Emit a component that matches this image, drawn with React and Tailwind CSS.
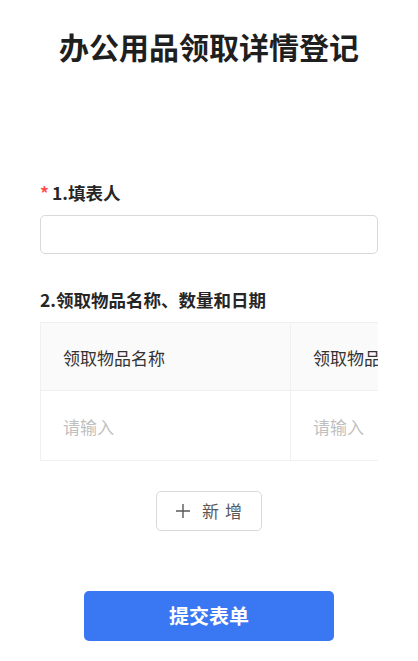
export default function App() {
  const cols = ['领取物品名称', '领取物品数量', '领取日期']

  return (
    <div className="min-h-[661px] bg-white px-10 font-['Noto_Sans_CJK_SC','Noto_Sans',sans-serif] text-[#262626]">
      {/* 标题 */}
      <h1 className="pt-[26px] text-center text-[30px] leading-[40px] font-bold text-[#1f1f1f]">
        办公用品领取详情登记
      </h1>

      {/* 1. 填表人 */}
      <div className="mt-[116px]">
        <div className="flex items-center text-[17.5px] leading-[22px] font-bold">
          <span className="mr-[3px] text-[#ff4d4f]">*</span>
          <span>1.填表人</span>
        </div>
        <input
          className="mt-[11px] block h-[39px] w-full rounded-[5px] border border-[#d9d9d9] px-3 outline-none"
          type="text"
        />
      </div>

      {/* 2. 领取物品 */}
      <div className="mt-[35px]">
        <div className="text-[17.5px] leading-[22px] font-bold">2.领取物品名称、数量和日期</div>
        <div className="mt-[11px] overflow-hidden">
          <div className="flex w-max">
            {cols.map((c) => (
              <div key={c} className="w-[250px] border-l border-[#f0f0f0]">
                <div className="flex h-[69px] items-center border-t border-b border-[#f0f0f0] bg-[#fafafa] px-[22px] pt-[2px] text-[17px] text-[#333]">
                  {c}
                </div>
                <div className="flex h-[70px] items-center border-b border-[#f0f0f0] px-[22px] pt-[3px] text-[17px] text-[#bfbfbf]">
                  请输入
                </div>
              </div>
            ))}
          </div>
        </div>
      </div>

      {/* 新增 */}
      <div className="mt-[30px] flex justify-center">
        <button className="flex h-[40px] w-[106px] items-center justify-center gap-[12px] rounded-[5px] border border-[#d9d9d9] bg-white text-[17px] text-[#595959]">
          <svg width="14" height="14" viewBox="0 0 14 14" fill="none" stroke="#595959" strokeWidth="1.4">
            <path d="M7 0v14M0 7h14" />
          </svg>
          <span className="tracking-[6px] -mr-[6px]">新增</span>
        </button>
      </div>

      {/* 提交 */}
      <div className="mt-[60px] flex justify-center pb-5">
        <button className="h-[50px] w-[250px] rounded-[5px] bg-[#3a77f3] text-[20px] font-bold text-white">
          提交表单
        </button>
      </div>
    </div>
  )
}
